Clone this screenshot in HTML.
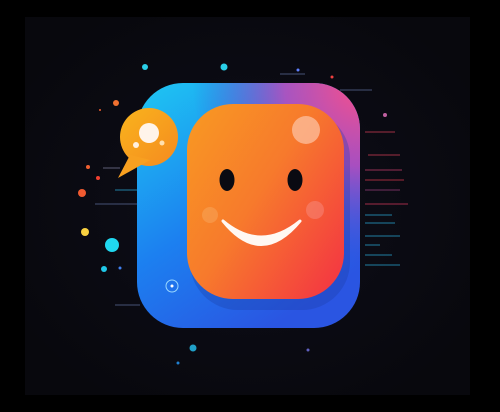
<!DOCTYPE html>
<html><head><style>html,body{margin:0;padding:0;background:#000;width:500px;height:412px;overflow:hidden}</style></head>
<body>
<svg width="500" height="412" viewBox="0 0 500 412" xmlns="http://www.w3.org/2000/svg">
<defs>
<linearGradient id="bl" x1="0" y1="0" x2="0.6" y2="1">
<stop offset="0" stop-color="#1ec8f2"/><stop offset="0.55" stop-color="#1c80f0"/><stop offset="1" stop-color="#2a55e2"/>
</linearGradient>
<radialGradient id="pk" cx="1" cy="0" r="0.75">
<stop offset="0" stop-color="#f8508a" stop-opacity="1"/><stop offset="0.45" stop-color="#c048b8" stop-opacity="0.85"/><stop offset="1" stop-color="#5040d0" stop-opacity="0"/>
</radialGradient>
<linearGradient id="or" x1="0" y1="0" x2="1" y2="0.8">
<stop offset="0" stop-color="#f89a22"/><stop offset="0.5" stop-color="#f77a2c"/><stop offset="1" stop-color="#f43c40"/>
</linearGradient>
<linearGradient id="sb" x1="0" y1="0" x2="1" y2="1">
<stop offset="0" stop-color="#f9b41c"/><stop offset="1" stop-color="#f58a20"/>
</linearGradient>
<radialGradient id="bg" cx="0.5" cy="0.5" r="0.6"><stop offset="0" stop-color="#0e0e1a"/><stop offset="1" stop-color="#08080d"/></radialGradient>
</defs>
<rect x="25" y="17" width="445" height="378" fill="url(#bg)"/>
<g stroke-width="1" opacity="0.7">
<line x1="365" y1="132" x2="395" y2="132" stroke="#e0405a"/>
<line x1="368" y1="155" x2="400" y2="155" stroke="#e0405a"/>
<line x1="365" y1="170" x2="402" y2="170" stroke="#d04070"/>
<line x1="365" y1="180" x2="404" y2="180" stroke="#e03a50"/>
<line x1="365" y1="190" x2="400" y2="190" stroke="#a04080"/>
<line x1="365" y1="204" x2="408" y2="204" stroke="#e03a60"/>
<line x1="365" y1="215" x2="392" y2="215" stroke="#2ab0e0"/>
<line x1="365" y1="223" x2="395" y2="223" stroke="#2ab0e0"/>
<line x1="365" y1="236" x2="400" y2="236" stroke="#2ab0e0"/>
<line x1="365" y1="245" x2="380" y2="245" stroke="#2ab0e0"/>
<line x1="365" y1="255" x2="392" y2="255" stroke="#2ab0e0"/>
<line x1="365" y1="265" x2="400" y2="265" stroke="#2ab0e0"/>
<line x1="115" y1="190" x2="137" y2="190" stroke="#2ab0e0"/>
<line x1="95" y1="204" x2="137" y2="204" stroke="#6070a0"/>
<line x1="103" y1="168" x2="120" y2="168" stroke="#8080a0"/>
<line x1="280" y1="74" x2="305" y2="74" stroke="#6070a0"/>
<line x1="340" y1="90" x2="372" y2="90" stroke="#6070a0"/>
<line x1="115" y1="305" x2="140" y2="305" stroke="#6070a0"/>
</g>
<g>
<circle cx="145" cy="67" r="3" fill="#2ad0e8"/><circle cx="224" cy="67" r="3.5" fill="#2ad0e8"/>
<circle cx="116" cy="103" r="3" fill="#f07030"/><circle cx="82" cy="193" r="4" fill="#f05a30"/>
<circle cx="85" cy="232" r="4" fill="#f8d040"/><circle cx="112" cy="245" r="7" fill="#20d8f0"/>
<circle cx="104" cy="269" r="3" fill="#20c8e8"/><circle cx="166" cy="207" r="6" fill="#fff"/>
<circle cx="193" cy="348" r="3.5" fill="#20a0c8"/><circle cx="88" cy="167" r="2" fill="#f06030"/>
<circle cx="98" cy="178" r="2" fill="#f04030"/><circle cx="385" cy="115" r="2" fill="#c060a0"/>
<circle cx="298" cy="70" r="1.5" fill="#6080ff"/><circle cx="332" cy="77" r="1.5" fill="#f04040"/>
<circle cx="178" cy="363" r="1.5" fill="#2080d0"/><circle cx="308" cy="350" r="1.5" fill="#6060c0"/>
<circle cx="120" cy="268" r="1.5" fill="#4080f0"/><circle cx="100" cy="110" r="1" fill="#f06030"/>
</g>
<rect x="137" y="83" width="223" height="245" rx="46" fill="url(#bl)"/>
<rect x="137" y="83" width="223" height="245" rx="46" fill="url(#pk)"/>
<rect x="190" y="110" width="160" height="200" rx="48" fill="#1a3aa0" opacity="0.3"/>
<rect x="187" y="104" width="157" height="195" rx="46" fill="url(#or)"/>
<circle cx="306" cy="130" r="14" fill="#fcc0a0" opacity="0.75"/>
<circle cx="315" cy="210" r="9" fill="#f8a0a0" opacity="0.35"/>
<circle cx="210" cy="215" r="8" fill="#f8c080" opacity="0.3"/>
<ellipse cx="227" cy="180" rx="7.5" ry="11" fill="#0a0a12"/>
<ellipse cx="295" cy="180" rx="7.5" ry="11" fill="#0a0a12"/>
<path d="M223 221 Q261 268 300 221 Q261 253 223 221 Z" fill="#fff8f2" stroke="#fff8f2" stroke-width="3" stroke-linejoin="round"/>
<circle cx="149" cy="137" r="29" fill="url(#sb)"/>
<path d="M130 155 L118 178 L150 160 Z" fill="#f8a020"/>
<circle cx="149" cy="133" r="10" fill="#fff4ea"/>
<circle cx="136" cy="145" r="3" fill="#fff0e0"/><circle cx="162" cy="143" r="2.5" fill="#ffe0b0"/>
<circle cx="172" cy="286" r="6" fill="none" stroke="#9ad8ff" stroke-width="1"/>
<circle cx="172" cy="286" r="1.5" fill="#fff"/>
</svg>
</body></html>
